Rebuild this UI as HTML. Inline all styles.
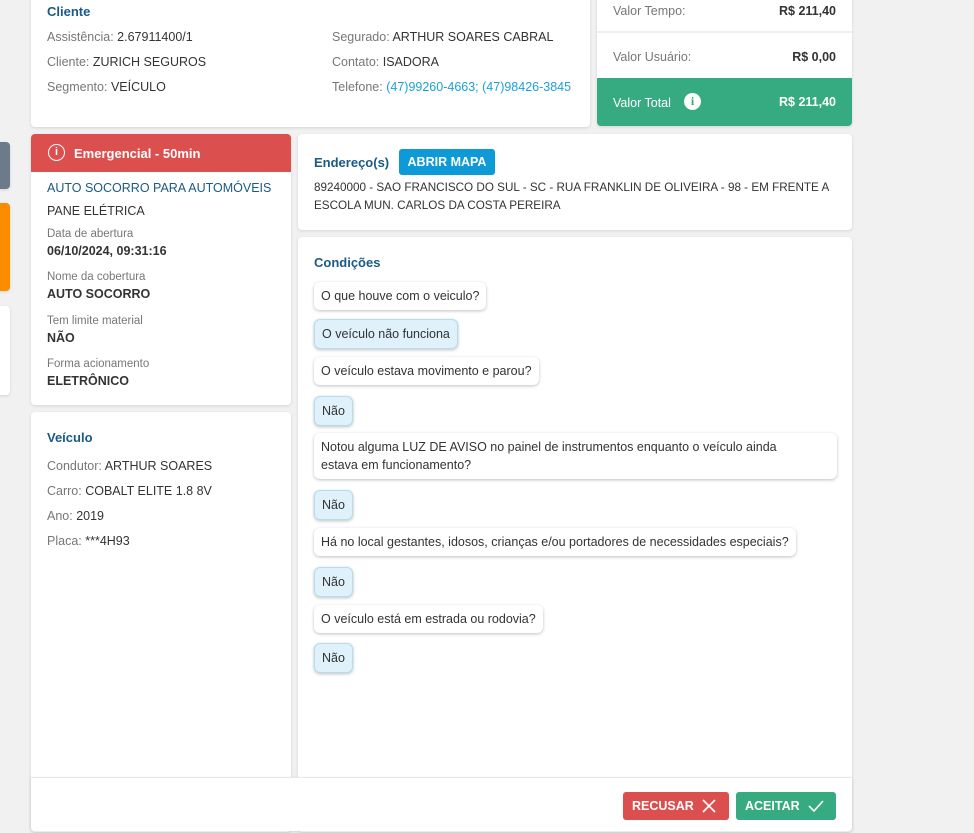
<!DOCTYPE html>
<html><head><meta charset="utf-8"><style>
*{box-sizing:border-box;margin:0;padding:0}
body{width:974px;height:833px;background:#f1f1f1;font-family:"Liberation Sans",sans-serif;font-size:12.5px;color:#333;position:relative;overflow:hidden}
.card{position:absolute;background:#fff;border-radius:4px;box-shadow:0 1px 3px rgba(0,0,0,.12)}
.t{position:absolute;white-space:nowrap}
.lbl{color:#777}
.h{color:#1a5a85;font-weight:bold;font-size:13px}
.bub{position:absolute;left:16px;background:#fff;border-radius:6px;box-shadow:0 1px 3px rgba(0,0,0,.25);padding:5px 7px;font-size:12.5px;line-height:18px;color:#333}
.ans{background:#dff1fa;border:1px solid #b6dcee}
</style></head><body>
<div class="card" style="left:-4px;top:142px;width:14px;height:47px;background:#6c7a8b"></div>
<div class="card" style="left:-4px;top:203px;width:14px;height:88px;background:#fb8c00"></div>
<div class="card" style="left:-4px;top:306px;width:14px;height:89px"></div>

<div class="card" style="left:31px;top:-4px;width:559px;height:131px">
<div class="t h" style="left:16px;top:8px">Cliente</div>
<div class="t" style="left:16px;top:34px"><span class="lbl">Assistência:</span> 2.67911400/1</div>
<div class="t" style="left:16px;top:59px"><span class="lbl">Cliente:</span> ZURICH SEGUROS</div>
<div class="t" style="left:16px;top:84px"><span class="lbl">Segmento:</span> VEÍCULO</div>
<div class="t" style="left:301px;top:34px"><span class="lbl">Segurado:</span> ARTHUR SOARES CABRAL</div>
<div class="t" style="left:301px;top:59px"><span class="lbl">Contato:</span> ISADORA</div>
<div class="t" style="left:301px;top:84px"><span class="lbl">Telefone:</span> <span style="color:#1ba1d8">(47)99260-4663; (47)98426-3845</span></div>
</div>

<div class="card" style="left:597px;top:-4px;width:255px;height:130px;overflow:hidden">
<div class="t lbl" style="left:16px;top:8px">Valor Tempo:</div>
<div class="t" style="right:16px;top:8px;font-weight:bold">R$ 211,40</div>
<div style="position:absolute;left:0;right:0;top:35px;height:2px;background:#eee"></div>
<div class="t lbl" style="left:16px;top:54px">Valor Usuário:</div>
<div class="t" style="right:16px;top:54px;font-weight:bold">R$ 0,00</div>
<div style="position:absolute;left:0;right:0;top:82px;height:48px;background:#36aa80"></div>
<div class="t" style="left:16px;top:100px;color:#fff">Valor Total</div>
<div style="position:absolute;left:87px;top:97px;width:17px;height:17px;border-radius:50%;background:#fff;color:#36aa80;font-weight:bold;font-size:12px;text-align:center;line-height:17px;font-family:'Liberation Serif',serif">i</div>
<div class="t" style="right:16px;top:99px;color:#fff;font-weight:bold">R$ 211,40</div>
</div>

<div class="card" style="left:31px;top:134px;width:260px;height:271px;overflow:hidden">
<div style="position:absolute;left:0;right:0;top:0;height:38px;background:#dc4f4f"></div>
<div style="position:absolute;left:17px;top:10px;width:17px;height:17px;border:1.6px solid #fff;border-radius:50%;color:#fff;font-size:11px;font-weight:bold;text-align:center;line-height:14px">i</div>
<div class="t" style="left:43px;top:12px;color:#fff;font-weight:bold;font-size:13px">Emergencial - 50min</div>
<div class="t" style="left:16px;top:47px;color:#1a5a85;font-size:12.5px">AUTO SOCORRO PARA AUTOMÓVEIS</div>
<div class="t" style="left:16px;top:70px">PANE ELÉTRICA</div>
<div class="t lbl" style="left:16px;top:94px;font-size:11.5px">Data de abertura</div>
<div class="t" style="left:16px;top:110px;font-weight:bold">06/10/2024, 09:31:16</div>
<div class="t lbl" style="left:16px;top:137px;font-size:11.5px">Nome da cobertura</div>
<div class="t" style="left:16px;top:153px;font-weight:bold">AUTO SOCORRO</div>
<div class="t lbl" style="left:16px;top:181px;font-size:11.5px">Tem limite material</div>
<div class="t" style="left:16px;top:197px;font-weight:bold">NÃO</div>
<div class="t lbl" style="left:16px;top:224px;font-size:11.5px">Forma acionamento</div>
<div class="t" style="left:16px;top:240px;font-weight:bold">ELETRÔNICO</div>
</div>

<div class="card" style="left:31px;top:412px;width:260px;height:420px">
<div class="t h" style="left:16px;top:18px">Veículo</div>
<div class="t" style="left:16px;top:47px"><span class="lbl">Condutor:</span> ARTHUR SOARES</div>
<div class="t" style="left:16px;top:72px"><span class="lbl">Carro:</span> COBALT ELITE 1.8 8V</div>
<div class="t" style="left:16px;top:97px"><span class="lbl">Ano:</span> 2019</div>
<div class="t" style="left:16px;top:122px"><span class="lbl">Placa:</span> ***4H93</div>
</div>

<div class="card" style="left:298px;top:134px;width:554px;height:96px">
<div class="t h" style="left:16px;top:21px">Endereço(s)</div>
<div style="position:absolute;left:101px;top:15px;width:96px;height:26px;background:#0e9ad6;border-radius:3px;color:#fff;font-weight:bold;font-size:12.5px;text-align:center;line-height:26px">ABRIR MAPA</div>
<div class="t" style="left:16px;top:45px;line-height:18px;font-size:11.7px">89240000 - SAO FRANCISCO DO SUL - SC - RUA FRANKLIN DE OLIVEIRA - 98 - EM FRENTE A<br>ESCOLA MUN. CARLOS DA COSTA PEREIRA</div>
</div>

<div class="card" style="left:298px;top:237px;width:554px;height:595px">
<div class="t h" style="left:16px;top:18px">Condições</div>
<div class="bub" style="top:45px">O que houve com o veiculo?</div>
<div class="bub ans" style="top:82px">O veículo não funciona</div>
<div class="bub" style="top:120px">O veículo estava movimento e parou?</div>
<div class="bub ans" style="top:159px">Não</div>
<div class="bub" style="top:196px;width:523px;padding-right:40px">Notou alguma LUZ DE AVISO no painel de instrumentos enquanto o veículo ainda estava em funcionamento?</div>
<div class="bub ans" style="top:253px">Não</div>
<div class="bub" style="top:291px">Há no local gestantes, idosos, crianças e/ou portadores de necessidades especiais?</div>
<div class="bub ans" style="top:330px">Não</div>
<div class="bub" style="top:368px">O veículo está em estrada ou rodovia?</div>
<div class="bub ans" style="top:406px">Não</div>
</div>

<div class="card" style="left:31px;top:777px;width:821px;height:54px;border-top:1px solid #e8e8e8;border-radius:0 0 4px 4px">
<div style="position:absolute;left:592px;top:14px;width:106px;height:28px;background:#dc4f4f;border-radius:3px;color:#fff;font-weight:bold;font-size:12.5px;line-height:28px;padding-left:9px">RECUSAR
<svg style="position:absolute;left:79px;top:7px" width="14" height="14" viewBox="0 0 14 14"><path d="M1 1L13 13M13 1L1 13" stroke="#fff" stroke-width="1.6"/></svg></div>
<div style="position:absolute;left:705px;top:14px;width:100px;height:28px;background:#36aa80;border-radius:3px;color:#fff;font-weight:bold;font-size:12.5px;line-height:28px;padding-left:9px">ACEITAR
<svg style="position:absolute;left:72px;top:8px" width="16" height="12" viewBox="0 0 16 12"><path d="M1 6L6 11L15 1" stroke="#fff" stroke-width="1.6" fill="none"/></svg></div>
</div>
</body></html>
